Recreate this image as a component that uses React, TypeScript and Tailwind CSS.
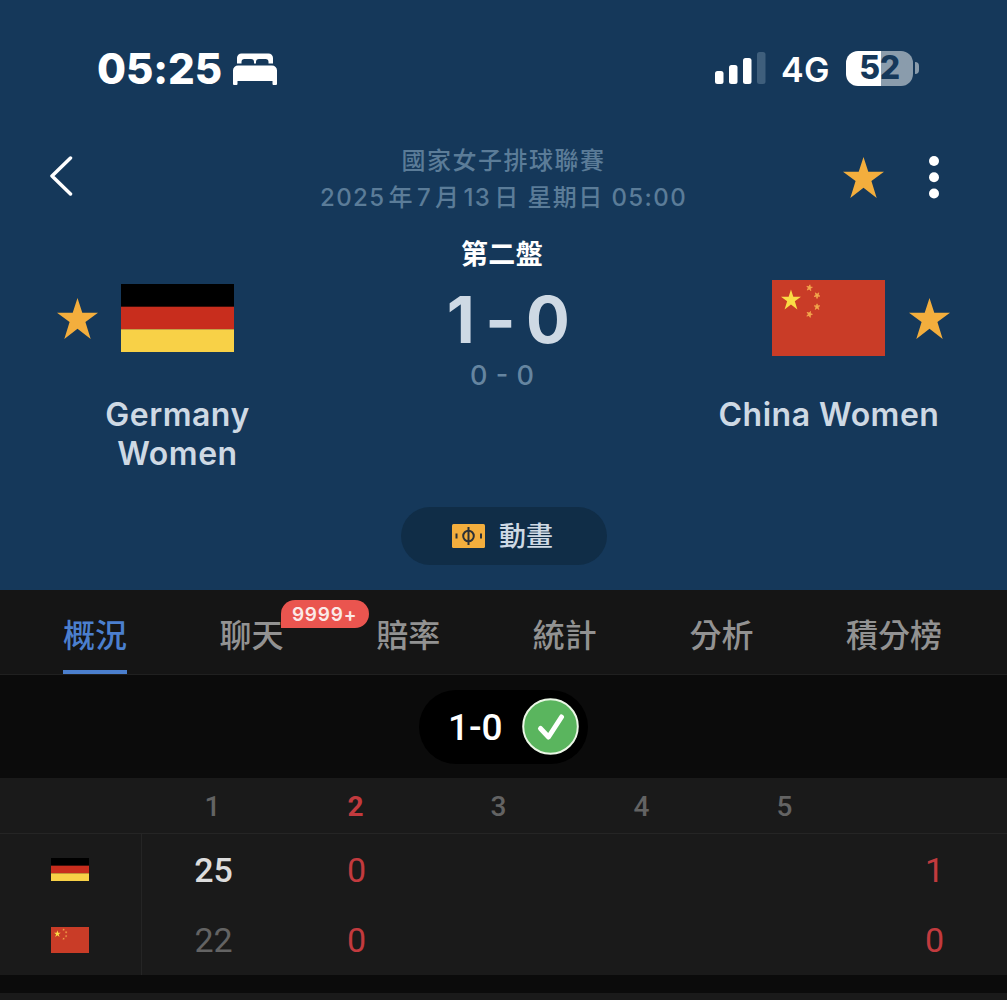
import React, { useState } from "react";

interface SetScore {
  home: string;
  away: string;
}

const STAR_POINTS =
  "21,0 25.9,15 42,15 29.1,24.6 34.5,42 21,31.5 7.5,42 12.9,24.6 0,15 16.1,15";

const TABS = ["概況", "聊天", "賠率", "統計", "分析", "積分榜"];

const SETS: SetScore[] = [
  { home: "25", away: "22" },
  { home: "0", away: "0" },
  { home: "", away: "" },
  { home: "", away: "" },
  { home: "", away: "" },
];

const CURRENT_SET = 1;

function Star() {
  return (
    <svg viewBox="0 0 42 42" className="w-[41px] h-[41px] shrink-0" fill="#f3ae3d">
      <polygon points={STAR_POINTS} />
    </svg>
  );
}

function GermanyFlag({ className }: { className: string }) {
  return (
    <svg viewBox="0 0 113 68" preserveAspectRatio="none" className={className}>
      <rect width="113" height="23" fill="#000000" />
      <rect y="22.7" width="113" height="22.6" fill="#c82d1d" />
      <rect y="45.3" width="113" height="22.7" fill="#f8d147" />
    </svg>
  );
}

function ChinaFlag({ className }: { className: string }) {
  return (
    <svg viewBox="0 0 113 76" preserveAspectRatio="none" className={className}>
      <rect width="113" height="76" fill="#c93c27" />
      <polygon points={STAR_POINTS} fill="#fadc45" transform="translate(9 9.5) scale(0.475)" />
      <g fill="#f3a94c" stroke="#f3a94c" strokeWidth="5" strokeLinejoin="round">
        <polygon points={STAR_POINTS} transform="translate(34.6 4.8) rotate(10 3 3) scale(0.135)" />
        <polygon points={STAR_POINTS} transform="translate(42.2 12.4) rotate(35 3 3) scale(0.135)" />
        <polygon points={STAR_POINTS} transform="translate(42.2 23.8) scale(0.135)" />
        <polygon points={STAR_POINTS} transform="translate(34.6 31.3) rotate(20 3 3) scale(0.135)" />
      </g>
    </svg>
  );
}

function StatusBar() {
  return (
    <div className="flex h-[138px] items-center pl-[97px] pr-[88px] text-white">
      <span className="text-[42px] leading-none font-extrabold tracking-[-0.1px]">05:25</span>
      <svg viewBox="0 0 46 32" className="ml-[10px] w-[46px] h-[32px]" fill="#ffffff">
        <path d="M5 10.500V5a4.500 4.500 0 0 1 4.500-4.500h27A4.500 4.500 0 0 1 41 5v5.500h-4.500V9a3 3 0 0 0-3-3h-6.500a3 3 0 0 0-3 3v1.500h-2V9a3 3 0 0 0-3-3h-6.500a3 3 0 0 0-3 3v1.500z" />
        <path d="M1 31V17.500a5 5 0 0 1 5-5h34a5 5 0 0 1 5 5V31a1 1 0 0 1-1 1h-2.500a1 1 0 0 1-1-1v-3H5.500v3a1 1 0 0 1-1 1H2a1 1 0 0 1-1-1z" />
      </svg>
      <svg viewBox="0 0 51 34" className="ml-auto w-[51px] h-[34px]" fill="#ffffff">
        <rect x="0" y="19" width="8.500" height="13" rx="2.500" />
        <rect x="14" y="13" width="8.500" height="19" rx="2.500" />
        <rect x="28" y="6" width="8.500" height="26" rx="2.500" />
        <rect x="42" y="0" width="8.500" height="32" rx="2.500" fill="#3f5f7c" />
      </svg>
      <span className="mt-[2px] ml-[15px] text-[34px] leading-none font-semibold tracking-[0.400px]">4G</span>
      <div className="mb-[2px] ml-[16px] flex h-[35px] w-[67px] items-center justify-center rounded-[12px] bg-linear-to-r from-white from-52% to-[#8a9cac] to-52%">
        <span className="text-[32px] leading-none font-extrabold tracking-[-0.5px] text-[#15385a]">52</span>
      </div>
      <span className="mb-[2px] ml-[2px] h-[12px] w-[4px] rounded-r-full bg-[#8a9cac]" />
    </div>
  );
}

function NavBar() {
  return (
    <div className="flex h-[78px] items-center justify-between pl-[49px] pr-[67px]">
      <div className="w-[115px] pb-[2px]">
        <svg viewBox="0 0 24 40" className="w-[24px] h-[40px]" fill="none" stroke="#ffffff" strokeWidth="3.500" strokeLinecap="round" strokeLinejoin="round">
          <path d="M21.500 2 3 20l18.500 18" />
        </svg>
      </div>
      <div className="pt-[3px] text-center text-[24px] leading-[37px] font-medium whitespace-nowrap text-[#5b7c98]">
        <p className="tracking-[1.500px]">國家女子排球聯賽</p>
        <p className="tracking-[1.400px]">
          2025<span className="mx-[3px]">年</span>7<span className="mx-[3px]">月</span>13
          <span className="ml-[3px]">日</span> 星期日 05:00
        </p>
      </div>
      <div className="flex w-[97px] items-center justify-between">
        <Star />
        <svg viewBox="0 0 12 44" className="w-[12px] h-[44px]" fill="#ffffff">
          <circle cx="6" cy="6" r="5" />
          <circle cx="6" cy="22.200" r="5" />
          <circle cx="6" cy="38.500" r="5" />
        </svg>
      </div>
    </div>
  );
}

function MatchHeader() {
  return (
    <div className="flex h-[291px] justify-between pt-[18px]">
      {/* home team */}
      <div className="flex w-[355px] flex-col pt-[44px]">
        <div className="flex h-[80px] items-center gap-[23px] pl-[57px]">
          <Star />
          <GermanyFlag className="h-[68px] w-[113px]" />
        </div>
        <p className="mt-[37px] text-center text-[32px] leading-[39px] font-semibold tracking-[0.500px] text-[#ced9e4]">
          Germany
          <br />
          Women
        </p>
      </div>

      {/* live score */}
      <div className="flex flex-col items-center pt-px pl-[10px] text-center whitespace-nowrap">
        <span className="mr-[12px] text-[27px] leading-[40px] font-bold tracking-[0.400px] text-white">第二盤</span>
        <span className="mt-[7px] text-[65px] leading-[76px] font-bold tracking-[-0.500px] text-[#ced9e4] [word-spacing:-4px]">1 - 0</span>
        <span className="mt-px mr-[12px] text-[27px] leading-[34px] font-medium text-[#6585a0] [word-spacing:1px]">0 - 0</span>
      </div>

      {/* away team */}
      <div className="flex w-[356px] flex-col pt-[44px]">
        <div className="flex h-[80px] items-center justify-end gap-[24px] pr-[57px]">
          <ChinaFlag className="h-[76px] w-[113px]" />
          <Star />
        </div>
        <p className="mt-[37px] text-center text-[32px] leading-[39px] font-semibold tracking-[0.500px] text-[#ced9e4]">
          China Women
        </p>
      </div>
    </div>
  );
}

function Tabs({ active, onSelect }: { active: number; onSelect: (i: number) => void }) {
  return (
    <div className="flex h-[85px] justify-between border-b border-[#202020] bg-[#151515] pl-[63px] pr-[65px]">
      {TABS.map((tab, i) => (
        <button
          key={tab}
          onClick={() => onSelect(i)}
          className={
            i === active
              ? "relative h-[84px] border-b-4 border-[#4b7fce] pt-[6px] text-[32px] leading-[80px] font-medium text-[#4b7fce]"
              : "relative h-[84px] border-b-4 border-transparent pt-[6px] text-[32px] leading-[80px] font-medium text-[#929292]"
          }
        >
          {tab}
          {i === 1 && (
            <span className="absolute top-[10px] left-[61px] flex h-[28px] w-[88px] items-center justify-center rounded-[14px] rounded-bl-none bg-[#ea554f] text-[19px] leading-none font-semibold tracking-[0.800px] text-[#fbe9e7]">
              9999+
            </span>
          )}
        </button>
      ))}
    </div>
  );
}

function ResultPill() {
  return (
    <div className="flex h-[103px] items-center justify-center bg-[#0b0b0b]">
      <div className="flex h-[74px] w-[169px] items-center justify-between rounded-full bg-black pr-[9px] pl-[29px]">
        <span className="pt-[2px] font-['Roboto'] text-[37px] leading-none font-medium text-white">1-0</span>
        <svg viewBox="0 0 57 57" className="w-[57px] h-[57px]">
          <circle cx="28.500" cy="28.500" r="27.300" fill="#5ab55e" stroke="#ebf7e6" strokeWidth="2" />
          <path d="M18.500 30.500 26.500 39 39.500 19" fill="none" stroke="#ffffff" strokeWidth="5" strokeLinecap="round" strokeLinejoin="round" />
        </svg>
      </div>
    </div>
  );
}

function SetTable() {
  return (
    <div className="bg-[#1a1a1a] font-['Roboto']">
      <div className="flex h-[56px] items-center border-b border-[#252525] pt-[2px] pl-[141px] text-[28px] font-medium text-[#636363]">
        {SETS.map((_, i) => (
          <span key={i} className={i === CURRENT_SET ? "w-[143px] text-center font-bold text-[#c23a3e]" : "w-[143px] text-center"}>
            {i + 1}
          </span>
        ))}
      </div>

      <div className="flex h-[141px]">
        <div className="flex w-[142px] flex-col border-r border-[#252525] pl-[51px]">
          <div className="flex h-[71px] items-center">
            <GermanyFlag className="h-[23px] w-[38px]" />
          </div>
          <div className="flex h-[70px] items-center">
            <ChinaFlag className="h-[26px] w-[38px]" />
          </div>
        </div>
        {SETS.map((set, i) => (
          <div
            key={i}
            className={
              i === CURRENT_SET
                ? "w-[143px] pt-px text-center text-[34px] leading-[70px] text-[#c23a3e]"
                : "w-[143px] pt-px text-center text-[34px] leading-[70px] text-[#636363]"
            }
          >
            <p className={i < CURRENT_SET ? "font-medium text-[#dcdcdc]" : ""}>{set.home}</p>
            <p>{set.away}</p>
          </div>
        ))}
        <div className="ml-auto pt-px pr-[63px] text-right text-[34px] leading-[70px] text-[#c23a3e]">
          <p>1</p>
          <p>0</p>
        </div>
      </div>
    </div>
  );
}

export default function App() {
  const [activeTab, setActiveTab] = useState<number>(0);

  return (
    <div className="h-[1000px] w-[1007px] overflow-hidden bg-[#0b0b0b] font-['Inter','Noto_Sans_CJK_TC',sans-serif]">
      <header className="flex h-[590px] flex-col items-center bg-[#15385a]">
        <div className="w-full">
          <StatusBar />
          <NavBar />
          <MatchHeader />
        </div>
        <button className="flex h-[58px] w-[206px] items-center justify-center gap-[14px] rounded-full bg-[#102d47] pr-[2px]">
          <svg viewBox="0 0 33 24" className="w-[33px] h-[24px]">
            <rect width="33" height="24" rx="1.500" fill="#f3ae3d" />
            <g fill="none" stroke="#2b3138" strokeWidth="2">
              <circle cx="16.500" cy="12" r="5.300" />
              <path d="M16.500 3v18M4.500 9.500v5M29 9.500v5" />
            </g>
          </svg>
          <span className="text-[27px] leading-none font-medium text-[#ced9e4]">動畫</span>
        </button>
      </header>
      <Tabs active={activeTab} onSelect={setActiveTab} />
      <ResultPill />
      <SetTable />
      <div className="mt-[18px] h-[7px] bg-[#1a1a1a]" />
    </div>
  );
}
